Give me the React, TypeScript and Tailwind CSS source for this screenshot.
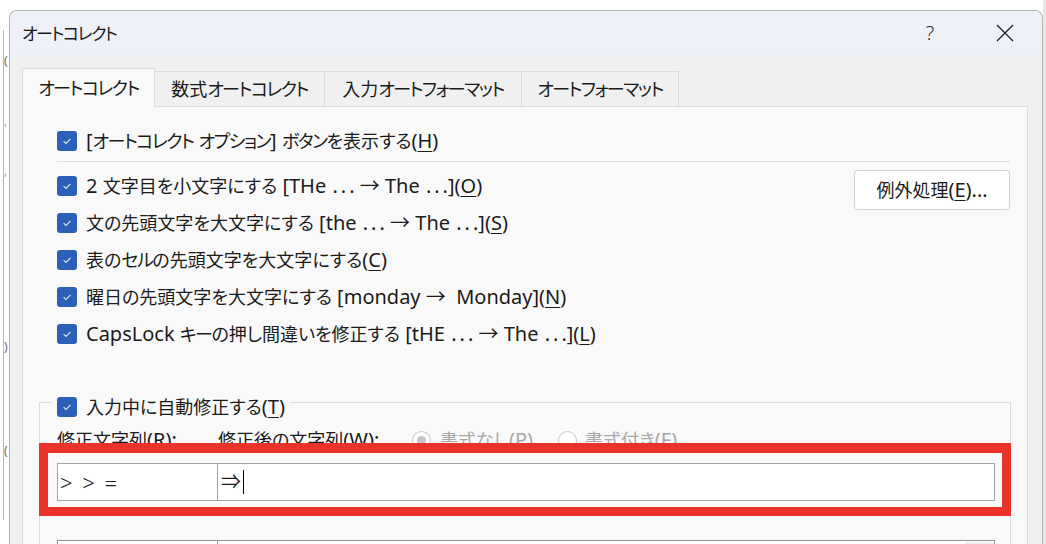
import React from "react";

// 欧文は一回り大きく、カタカナは詰めて Yu Gothic UI の幅に寄せる
const isLatin = (ch: string) => /[\u0000-\u00ff\u2192]/.test(ch);
const isKata = (ch: string) => /[\u30a0-\u30ff]/.test(ch);

const J = ({ s, latin = "text-[20px]" }: { s: string; latin?: string }) => {
  const runs: { kind: string; text: string }[] = [];
  for (let i = 0; i < s.length; i++) {
    let ch = s[i];
    let kind: string;
    if (ch === "&") {
      ch = s[++i];
      kind = "u";
    } else if (ch === "…") kind = "e";
    else kind = isLatin(ch) ? "l" : isKata(ch) ? "k" : "c";
    const last = runs[runs.length - 1];
    if (last && last.kind === kind && kind !== "u" && kind !== "e") last.text += ch;
    else runs.push({ kind, text: ch });
  }
  return (
    <>
      {runs.map((r, i) =>
        r.kind === "u" ? (
          <span key={i} className={`${latin} underline decoration-1 underline-offset-[3px]`}>
            {r.text}
          </span>
        ) : r.kind === "e" ? (
          <span key={i} className={`${latin} ml-[1px]`}>
            <span className="tracking-[3px]">..</span>.
          </span>
        ) : r.kind === "l" ? (
          <span key={i} className={latin}>
            {r.text}
          </span>
        ) : r.kind === "k" ? (
          <span key={i} className="tracking-[-1.5px]">
            {r.text}
          </span>
        ) : (
          <span key={i}>{r.text}</span>
        )
      )}
    </>
  );
};

const Check = () => (
  <span className="flex h-[20px] w-[20px] shrink-0 items-center justify-center rounded-[3px] bg-[#2c5fb7]">
    <svg width="12" height="12" viewBox="0 0 12 12">
      <path d="M2.6 6.2 L5 8.5 L9.5 3.9" fill="none" stroke="#dfe8f7" strokeWidth="1.1" />
    </svg>
  </span>
);

const Row = ({ s }: { s: string }) => (
  <div className="flex h-[37px] items-center gap-[9px]">
    <Check />
    <span className="whitespace-pre">
      <J s={s} />
    </span>
  </div>
);

const Radio = ({ on }: { on?: boolean }) => (
  <span className="flex h-[19px] w-[19px] shrink-0 items-center justify-center rounded-full border border-[#c8c8c8] bg-white">
    {on && <span className="h-[9px] w-[9px] rounded-full bg-[#c4c4c4]" />}
  </span>
);

export default function App() {
  return (
    <div
      className="flex h-[544px] w-[1046px] overflow-hidden bg-white text-[18px] leading-none text-[#1b1b1b] [font-feature-settings:'palt']"
      style={{ fontFamily: '"Noto Sans", "Noto Sans CJK JP", sans-serif' }}
    >
      {/* 背景の別ウィンドウ */}
      <div className="flex w-[9px] shrink-0">
        <div className="w-[3px]" />
        <div className="mt-[30px] mb-[24px] w-px bg-[#b8b8b8]" />
        <div className="flex w-[5px] flex-col text-[12px] text-[#666]">
          <span className="mt-[55px] h-[16px]">(</span>
          <span className="mt-[52px] h-[16px] text-[#aaa]">'</span>
          <span className="mt-[26px] h-[16px] text-[#aaa]">,</span>
          <span className="mt-[160px] h-[16px]">)</span>
          <span className="mt-[88px] h-[16px]">(</span>
        </div>
      </div>

      {/* ダイアログ */}
      <div className="mt-[10px] flex h-[534px] w-[1034px] shrink-0 flex-col overflow-hidden rounded-t-[8px] border border-b-0 border-[#b0b0b0] bg-[#f0f0f0]">
        <div className="flex h-[44px] shrink-0 items-center bg-[#eef1f7] pl-[12px] pr-[27px]">
          <span className="text-[17px]">
            <J s="オートコレクト" />
          </span>
          <div className="ml-auto flex items-center gap-[55px]">
            <span className="w-[20px] text-center text-[20px] font-light text-[#333]">?</span>
            <svg width="20" height="20" viewBox="0 0 20 20">
              <path d="M2 2 L18 18 M18 2 L2 18" stroke="#222" strokeWidth="1.3" />
            </svg>
          </div>
        </div>

        <div className="flex flex-1 flex-col pt-[13px]">
          {/* タブ */}
          <div className="relative z-10 -mb-px ml-[12px] flex items-end">
            <div className="flex h-[39px] w-[133px] items-center justify-center border border-b-0 border-[#dcdcdc] bg-[#f9f9f9]">
              <J s="オートコレクト" />
            </div>
            <div className="mb-px flex h-[35px] w-[170px] items-center justify-center border-t border-r border-[#dcdcdc]">
              <J s="数式オートコレクト" />
            </div>
            <div className="mb-px flex h-[35px] w-[197px] items-center justify-center border-t border-r border-[#dcdcdc]">
              <J s="入力オートフォーマット" />
            </div>
            <div className="mb-px flex h-[35px] w-[157px] items-center justify-center border-t border-r border-[#dcdcdc]">
              <J s="オートフォーマット" />
            </div>
          </div>

          {/* パネル */}
          <div className="ml-[12px] mr-[14px] flex-1 border border-[#dcdcdc] bg-[#f9f9f9] pl-[34px] pr-[17px] pt-[15px]">
            <Row s="[オートコレクト オプション] ボタンを表示する(&H)" />
            <div className="mt-[2px] h-px bg-[#dcdcdc]" />

            <div className="mt-[5px] flex">
              <div className="flex flex-1 flex-col">
                <Row s="2 文字目を小文字にする [THe … → The …](&O)" />
                <Row s="文の先頭文字を大文字にする [the … → The …](&S)" />
                <Row s="表のセルの先頭文字を大文字にする(&C)" />
                <Row s="曜日の先頭文字を大文字にする [monday →  Monday](&N)" />
                <Row s="CapsLock キーの押し間違いを修正する [tHE … → The …](&L)" />
              </div>
              <button className="mt-[3px] flex h-[40px] w-[156px] items-center justify-center rounded-[4px] border border-[#d0d0d0] bg-white">
                <J s="例外処理(&E)" />
                <span className="text-[20px]">...</span>
              </button>
            </div>

            {/* 入力中に自動修正する */}
            <div className="-ml-[18px] -mr-px mt-[50px] border border-[#dcdcdc]">
              <div className="-mt-[9px] ml-[12px] flex h-[26px] w-fit items-center gap-[9px] bg-[#f9f9f9] px-[5px]">
                <Check />
                <span>
                  <J s="入力中に自動修正する(&T)" />
                </span>
              </div>
              <div className="flex h-[40px] items-center pl-[17px]">
                <span className="w-[161px]">
                  <J s="修正文字列(&R):" />
                </span>
                <span className="w-[194px]">
                  <J s="修正後の文字列(&W):" />
                </span>
                <Radio on />
                <span className="ml-[9px] w-[118px] text-[#a8a8a8]">
                  <J s="書式なし(&P)" />
                </span>
                <Radio />
                <span className="ml-[8px] text-[#a8a8a8]">
                  <J s="書式付き(&F)" />
                </span>
              </div>

              {/* 注目枠 */}
              <div className="relative z-10 -mx-px -mt-[17px] border-[9px] border-t-[10px] border-[#e8322a] bg-[#f9f9f9] pb-[6px] pl-[9px] pr-[7px] pt-[10px]">
                <div className="flex h-[38px] text-[22px]">
                  <div className="flex w-[161px] items-center whitespace-pre border border-[#a3a6ad] bg-white pl-[2px] font-light tracking-[2px]">
                    {"> > ="}
                  </div>
                  <div className="flex flex-1 items-center border border-l-0 border-[#a3a6ad] bg-white pl-[3px] text-[20px]">
                    <span>⇒</span>
                    <span className="ml-[2px] h-[24px] w-px bg-black" />
                  </div>
                </div>
              </div>

              <div className="ml-[17px] mr-[15px] mt-[24px] flex h-[38px]">
                <div className="w-[161px] border border-[#8f939b] bg-white" />
                <div className="flex flex-1 justify-end border border-l-0 border-[#8f939b] bg-white pr-[1px] pt-[1px]">
                  <div className="h-[30px] w-[28px] bg-[#ececec]" />
                </div>
              </div>
            </div>
          </div>
        </div>
      </div>

      <div className="w-[3px] shrink-0 bg-[#e8e8e8]" />
    </div>
  );
}
